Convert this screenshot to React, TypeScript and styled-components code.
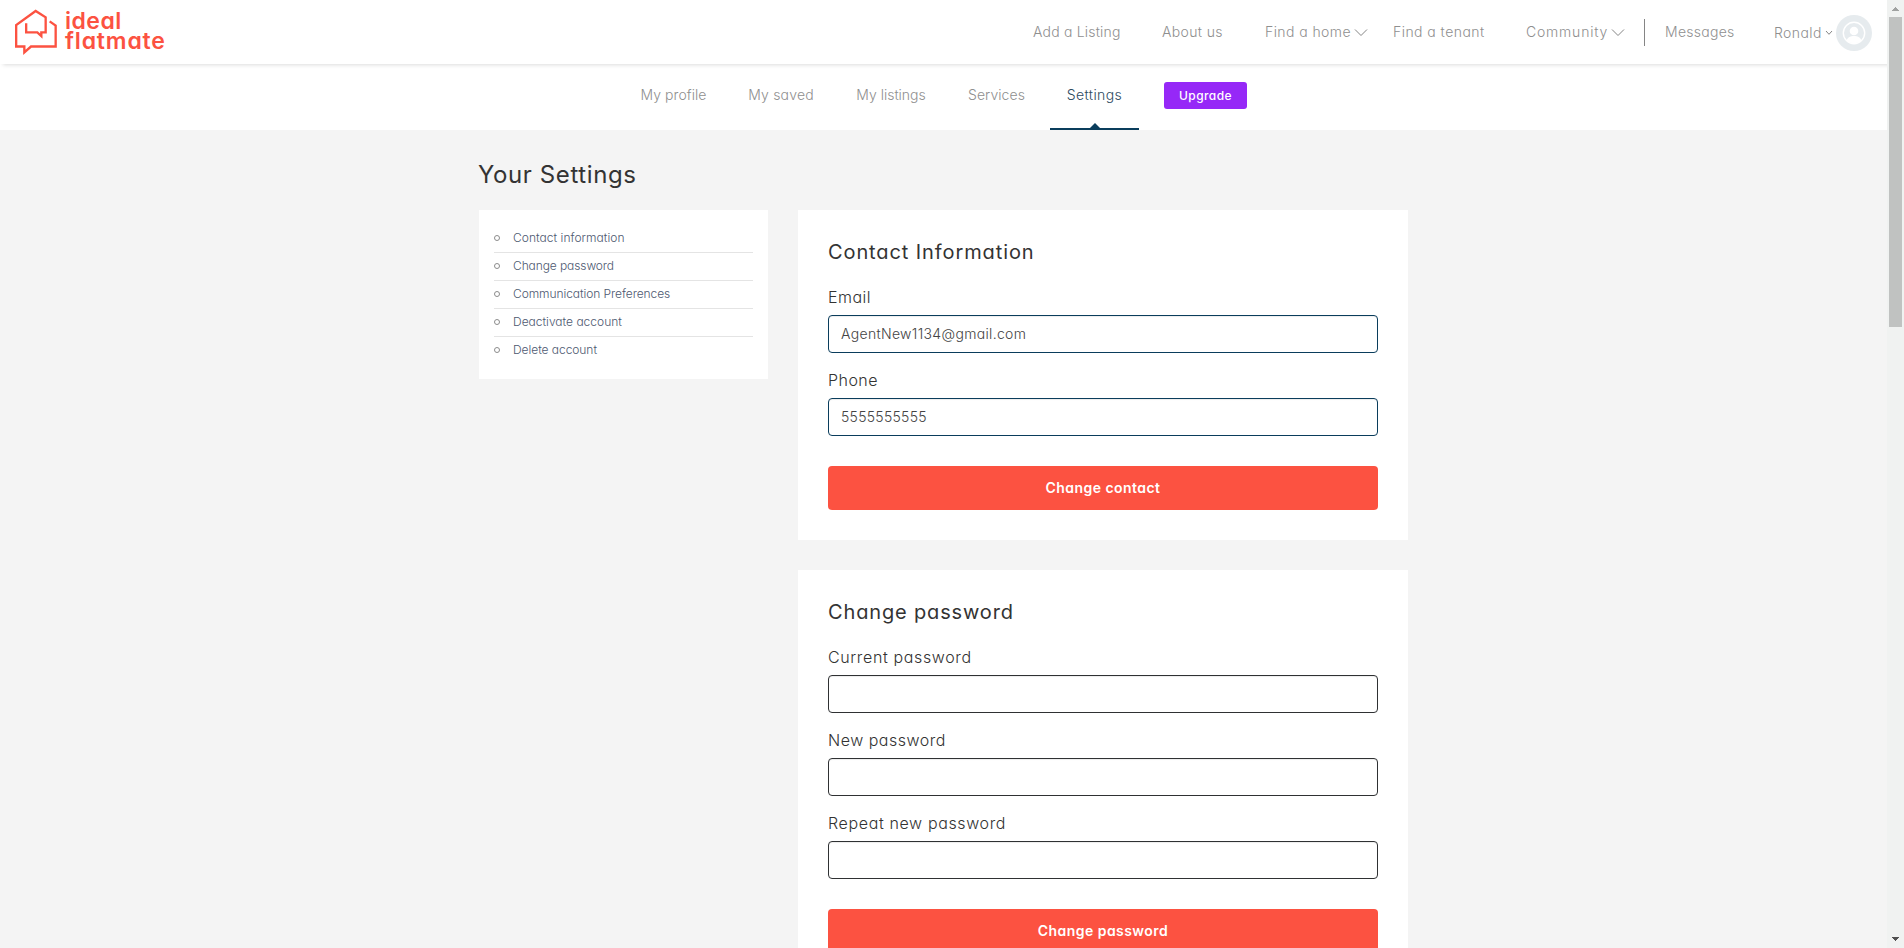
import React from 'react';
import styled, { createGlobalStyle } from 'styled-components';

const GlobalStyle = createGlobalStyle`
  *, *::before, *::after { box-sizing: border-box; }
  body {
    margin: 0;
    overflow: hidden;
    background: #f4f4f4;
    color: #333;
    font-family: Inter, "Liberation Sans", sans-serif;
    font-weight: 300;
    font-feature-settings: "cv11" 1;
  }
`;

const Viewport = styled.div`
  display: flex;
  height: 100vh;
  overflow: hidden;
`;

const Page = styled.div`
  flex: 1;
  min-width: 0;
  overflow: hidden;
`;

/* Top bar */
const Header = styled.header`
  position: relative;
  z-index: 1;
  display: flex;
  align-items: center;
  justify-content: space-between;
  height: 64px;
  padding: 0 15px;
  background: #fff;
  box-shadow: 3px 1px 4px rgba(0, 0, 0, 0.14);
`;

const Brand = styled.a`
  display: flex;
  align-items: center;
  gap: 7px;
  color: #fc5241;
`;

const BrandName = styled.span`
  display: flex;
  flex-direction: column;
  font-size: 23px;
  font-weight: 600;
  line-height: 20px;
  margin-top: -3px;
`;

const BrandLine = styled.span<{ $track: number }>`
  letter-spacing: ${(p) => p.$track}px;
`;

const MainNav = styled.nav`
  display: flex;
  align-items: center;
  height: 64px;
`;

const NavLink = styled.a<{ $width: number; $track: number }>`
  display: flex;
  align-items: center;
  width: ${(p) => p.$width}px;
  font-size: 14px;
  line-height: 20px;
  letter-spacing: ${(p) => p.$track}px;
  white-space: nowrap;
  color: #8f8f8f;

  svg { margin: 1px 0 0 3px; }
`;

const Divider = styled.span`
  width: 1px;
  height: 27px;
  margin-right: 20px;
  background: #858585;
`;

const UserMenu = styled.a`
  display: flex;
  align-items: center;
  width: 98px;
  margin-left: 1px;
  margin-top: 1px;
  font-size: 14px;
  line-height: 20px;
  letter-spacing: 0.4px;
  color: #8f8f8f;

  svg { margin-left: 3px; }
  svg:last-child { margin-left: auto; }
`;

/* Account tabs */
const TabBar = styled.nav`
  display: flex;
  justify-content: center;
  height: 66px;
  padding-right: 16px;
  background: #fff;
`;

const Tab = styled.a<{ $width: number; $track: number; $active?: boolean }>`
  position: relative;
  display: flex;
  justify-content: center;
  width: ${(p) => p.$width}px;
  padding-top: 21px;
  font-size: 14px;
  line-height: 20px;
  letter-spacing: ${(p) => p.$track}px;
  white-space: nowrap;
  color: ${(p) => (p.$active ? '#2c4a5e' : '#8f8f8f')};
  border-bottom: 2px solid ${(p) => (p.$active ? '#0a3d5c' : 'transparent')};
`;

const TabPointer = styled.span`
  position: absolute;
  left: 50%;
  bottom: 0;
  margin-left: -5px;
  border: 5px solid transparent;
  border-top: 0;
  border-bottom-color: #0a3d5c;
`;

const UpgradeButton = styled.button`
  width: 83px;
  height: 27px;
  margin: 18px 0 0 25px;
  padding: 0;
  border: 0;
  border-radius: 3px;
  background: #9628f7;
  color: #fff;
  font: 500 12px Inter, sans-serif;
  font-feature-settings: "cv11" 1;
  letter-spacing: 0.4px;
`;

/* Content */
const Content = styled.main`
  width: 929px;
  margin-left: 479px;
  padding-top: 28px;
`;

const PageTitle = styled.h1`
  margin: 0 0 18px -1px;
  font-size: 24px;
  font-weight: 400;
  line-height: 34px;
  letter-spacing: 0.6px;
`;

const Columns = styled.div`
  display: grid;
  grid-template-columns: 289px 610px;
  gap: 30px;
  align-items: start;
`;

const SideMenu = styled.ul`
  margin: 0;
  padding: 15px 15px 14px;
  height: 169px;
  list-style: none;
  background: #fff;
`;

const SideItem = styled.li<{ $track: number }>`
  display: flex;
  align-items: center;
  gap: 13px;
  height: 28px;
  padding-bottom: 1px;
  border-bottom: 1px solid #e4e4e4;
  font-size: 12px;
  line-height: 16px;
  letter-spacing: ${(p) => p.$track}px;
  color: #4d5870;

  &:last-child { border-bottom-color: transparent; }
`;

const Ring = styled.span`
  width: 6px;
  height: 6px;
  border: 1px solid #8c8c8c;
  border-radius: 50%;
`;

const Cards = styled.div`
  display: flex;
  flex-direction: column;
  gap: 30px;
`;

const Card = styled.section`
  padding: 30px;
  background: #fff;
`;

const CardTitle = styled.h2<{ $track: number }>`
  margin: 0 0 17px;
  font-size: 20px;
  font-weight: 400;
  line-height: 25px;
  letter-spacing: ${(p) => p.$track}px;
`;

const Field = styled.label<{ $track: number }>`
  display: block;
  margin-bottom: 12px;
  padding-top: 3px;
  font-size: 16px;
  line-height: 24px;
  letter-spacing: ${(p) => p.$track}px;
`;

const FieldText = styled.span`
  display: block;
  margin-bottom: 6px;
`;

const Input = styled.input<{ $filled: boolean; $track: number }>`
  display: block;
  width: 100%;
  height: 38px;
  padding: 0 12px 1px;
  border: 1px solid ${(p) => (p.$filled ? '#0a3d5c' : '#2f3133')};
  border-radius: 4px;
  background: #fff;
  box-shadow: inset 0 1px 1px rgba(0, 0, 0, 0.075);
  color: #444;
  font: 300 14px Inter, sans-serif;
  font-feature-settings: "cv11" 1;
  letter-spacing: ${(p) => p.$track}px;
`;

const SubmitButton = styled.button`
  display: block;
  width: 100%;
  height: 44px;
  margin-top: 30px;
  padding: 0 0 2px;
  border: 0;
  border-radius: 4px;
  background: #fc5241;
  color: #fff;
  font: 600 14px Inter, sans-serif;
  font-feature-settings: "cv11" 1;
  letter-spacing: 0.45px;
`;

/* Scrollbar */
const Scrollbar = styled.div`
  display: flex;
  flex-direction: column;
  align-items: center;
  justify-content: space-between;
  width: 17px;
  background: #f0f2f1;
`;

const ScrollTrack = styled.div`
  flex: 1;
  width: 13px;
`;

const ScrollThumb = styled.div`
  height: 310px;
  background: #c0c2c1;
`;

const ScrollArrow = ({ down }: { down?: boolean }) => (
  <svg width="17" height="17" viewBox="0 0 17 17" shapeRendering="crispEdges">
    {down ? <path d="M5 6h7L8.500 10z" fill="#505050" /> : <path d="M5 11h7L8.500 7z" fill="#a0a2a1" />}
  </svg>
);

const Chevron = () => (
  <svg width="14" height="9" viewBox="0 0 14 9" fill="none" stroke="#858585" strokeWidth="1">
    <path d="M1 1.500L7 7.500L13 1.500" />
  </svg>
);

const SmallChevron = () => (
  <svg width="8" height="6" viewBox="0 0 8 6" fill="none" stroke="#858585" strokeWidth="1">
    <path d="M1 1L4 4.300L7 1" />
  </svg>
);

const Logo = () => (
  <svg width="43" height="46" viewBox="45 28 129 138" fill="none" stroke="#fc5241" strokeWidth="7">
    <path d="M78.500 71V98H112L124 109V98H137V53L107 34L48.500 76V140.500H73V158L93 140.500H167V78L149 65" />
  </svg>
);

const Avatar = () => (
  <svg width="36" height="36" viewBox="0 0 36 36">
    <circle cx="18" cy="18" r="18" fill="#e6ebee" />
    <circle cx="18" cy="18" r="10.700" fill="none" stroke="#fff" strokeWidth="1.400" />
    <circle cx="18" cy="16" r="4.300" fill="#fff" />
    <path d="M10.500 25.500C12 22 14.500 21 18 21S24 22 25.500 25.500C21 29 15 29 10.500 25.500Z" fill="#fff" />
  </svg>
);

const mainLinks = [
  { label: 'Add a Listing', width: 129, track: 0.2 },
  { label: 'About us', width: 103, track: 0.36 },
  { label: 'Find a home', width: 128, track: 0.42, menu: true },
  { label: 'Find a tenant', width: 133, track: 0.45 },
  { label: 'Community', width: 118, track: 0.8, menu: true },
];

const tabs = [
  { label: 'My profile', width: 99, track: 0.07 },
  { label: 'My saved', width: 116, track: 0.2 },
  { label: 'My listings', width: 104, track: 0 },
  { label: 'Services', width: 107, track: 0.08 },
  { label: 'Settings', width: 89, track: 0.4, active: true },
];

const sections = [
  { label: 'Contact information', track: 0.04 },
  { label: 'Change password', track: -0.1 },
  { label: 'Communication Preferences', track: -0.07 },
  { label: 'Deactivate account', track: 0 },
  { label: 'Delete account', track: -0.05 },
];

const forms = [
  {
    title: 'Contact Information',
    track: 0.9,
    action: 'Change contact',
    fields: [
      { label: 'Email', track: 0.5, value: 'AgentNew1134@gmail.com', valueTrack: 0.33 },
      { label: 'Phone', track: 0.46, value: '5555555555', valueTrack: 0.28 },
    ],
  },
  {
    title: 'Change password',
    track: 0.85,
    action: 'Change password',
    fields: [
      { label: 'Current password', track: 0.63, value: '', valueTrack: 0 },
      { label: 'New password', track: 0.5, value: '', valueTrack: 0 },
      { label: 'Repeat new password', track: 0.63, value: '', valueTrack: 0 },
    ],
  },
];

export default function App() {
  return (
    <>
      <GlobalStyle />
      <Viewport>
        <Page>
          <Header>
            <Brand>
              <Logo />
              <BrandName>
                <BrandLine $track={0.5}>ideal</BrandLine>
                <BrandLine $track={0.85}>flatmate</BrandLine>
              </BrandName>
            </Brand>
            <MainNav>
              {mainLinks.map((l) => (
                <NavLink key={l.label} $width={l.width} $track={l.track}>
                  {l.label}
                  {l.menu && <Chevron />}
                </NavLink>
              ))}
              <Divider />
              <NavLink $width={108} $track={0.27}>Messages</NavLink>
              <UserMenu>
                Ronald
                <SmallChevron />
                <Avatar />
              </UserMenu>
            </MainNav>
          </Header>
          <TabBar>
            {tabs.map((t) => (
              <Tab key={t.label} $width={t.width} $track={t.track} $active={t.active}>
                {t.label}
                {t.active && <TabPointer />}
              </Tab>
            ))}
            <UpgradeButton>Upgrade</UpgradeButton>
          </TabBar>
          <Content>
            <PageTitle>Your Settings</PageTitle>
            <Columns>
              <SideMenu>
                {sections.map((s) => (
                  <SideItem key={s.label} $track={s.track}>
                    <Ring />
                    {s.label}
                  </SideItem>
                ))}
              </SideMenu>
              <Cards>
                {forms.map((f) => (
                  <Card key={f.title}>
                    <CardTitle $track={f.track}>{f.title}</CardTitle>
                    {f.fields.map((d) => (
                      <Field key={d.label} $track={d.track}>
                        <FieldText>{d.label}</FieldText>
                        <Input defaultValue={d.value} $filled={d.value !== ''} $track={d.valueTrack} />
                      </Field>
                    ))}
                    <SubmitButton>{f.action}</SubmitButton>
                  </Card>
                ))}
              </Cards>
            </Columns>
          </Content>
        </Page>
        <Scrollbar>
          <ScrollArrow />
          <ScrollTrack>
            <ScrollThumb />
          </ScrollTrack>
          <ScrollArrow down />
        </Scrollbar>
      </Viewport>
    </>
  );
}
